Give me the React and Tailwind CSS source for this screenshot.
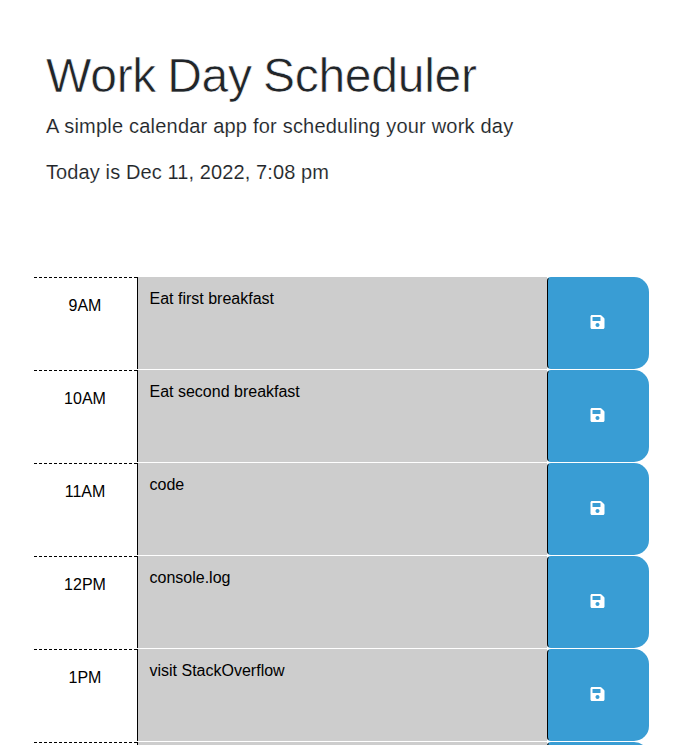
import { FaSave } from "react-icons/fa";

const blocks = [
  { hour: "9AM", text: "Eat first breakfast" },
  { hour: "10AM", text: "Eat second breakfast" },
  { hour: "11AM", text: "code" },
  { hour: "12PM", text: "console.log" },
  { hour: "1PM", text: "visit StackOverflow" },
  { hour: "", text: "" },
];

function TimeBlock({ hour, text }) {
  return (
    <div className="flex h-[93px]">
      <div className="w-[103px] shrink-0 border-t border-dashed border-black pt-4 pr-px text-center">
        {hour}
      </div>
      <div className="mb-px w-[410px] shrink-0 border-l border-black bg-[#cdcdcd] pt-[10px] pl-[11.5px]">
        {text}
      </div>
      <button
        aria-label="Save"
        className="mb-px flex w-[102px] shrink-0 items-center justify-center rounded-l-[4px] rounded-r-[15px] border border-transparent border-l-black bg-[#399dd4] pr-[2px] pb-[2px] text-white"
      >
        <FaSave className="h-4 w-4" viewBox="-48 0 512 512" />
      </button>
    </div>
  );
}

export default function App() {
  return (
    <div className="h-[745px] overflow-hidden bg-white font-['Liberation_Sans',Arial,sans-serif] text-base text-black">
      <header className="h-[277px] pt-[47px] pl-[46px] text-[#212529]">
        <h1 className="text-[48px] leading-[58px] tracking-[-0.25px] [word-spacing:-2px] whitespace-nowrap [-webkit-text-stroke:0.6px_white]">
          Work Day Scheduler
        </h1>
        <p className="mt-[6px] text-[20px] leading-[30px] tracking-[0.21px] whitespace-nowrap [-webkit-text-stroke:0.12px_white]">
          A simple calendar app for scheduling your work day
        </p>
        <p className="mt-4 text-[20px] leading-[30px] tracking-[0.11px] whitespace-nowrap [-webkit-text-stroke:0.12px_white]">
          Today is Dec 11, 2022, 7:08 pm
        </p>
      </header>
      <main className="pl-[34px]">
        {blocks.map((b, i) => (
          <TimeBlock key={i} {...b} />
        ))}
      </main>
    </div>
  );
}
